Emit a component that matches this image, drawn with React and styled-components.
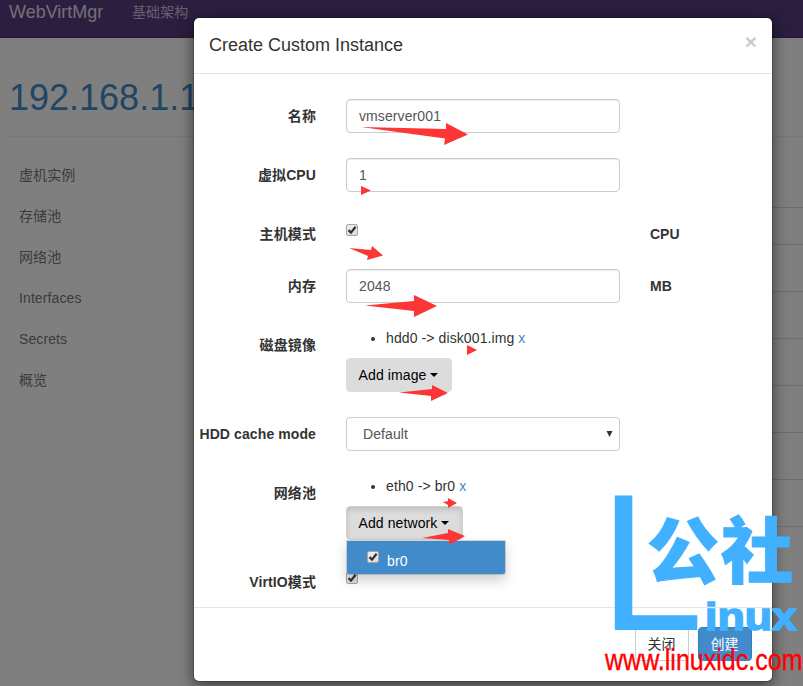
import React from "react";
import styled, { createGlobalStyle, css } from "styled-components";

const GlobalStyle = createGlobalStyle`
    * {
        box-sizing: border-box;
    }

    body {
        margin: 0;
        overflow: hidden;
        background: #fff;
        color: #333;
        font: 14px/20px "Liberation Sans", "Noto Sans CJK SC", sans-serif;
        letter-spacing: 0.1px;
    }
`

const Screen = styled.div`
    position: relative;
    width: 803px;
    height: 686px;
    overflow: hidden;
`

const Navbar = styled.nav`
    display: flex;
    height: 38px;
    padding-left: 9px;
    background: #563d7c;
    border-bottom: 1px solid #463265;
    color: #cdbfe3;
    line-height: 24px;

    .brand {
        width: 123px;
        color: #e4dfec;
        font-size: 18px;
        letter-spacing: 0;
    }
`

const Page = styled.main`
    padding: 35px 0 0 9px;

    h1 {
        margin: 0;
        height: 64px;
        border-bottom: 1px solid #eee;
        color: #428bca;
        font-size: 36px;
        font-weight: 400;
        line-height: 50px;
        letter-spacing: 0;
    }
`

const Columns = styled.div`
    display: flex;
    justify-content: space-between;
`

const SideNav = styled.ul`
    list-style: none;
    margin: 18px 0 0;
    padding: 0 0 0 10px;
    color: #777;

    li {
        height: 41px;
        line-height: 41px;
    }
`

const Table = styled.div`
    width: 200px;
    margin-top: 70px;
`

const TableRow = styled.div`
    height: ${props => props.$height}px;
    border-top: 1px solid #ddd;
`

const Backdrop = styled.div`
    position: absolute;
    inset: 0;
    background: rgba(0, 0, 0, 0.5);
`

const Modal = styled.section`
    position: absolute;
    top: 17px;
    left: 193px;
    width: 580px;
    height: 665px;
    background: #fff;
    background-clip: padding-box;
    border: 1px solid rgba(0, 0, 0, 0.2);
    border-radius: 6px;
    box-shadow: 0 5px 15px rgba(0, 0, 0, 0.5);
`

const ModalHeader = styled.header`
    display: flex;
    justify-content: space-between;
    height: 56px;
    padding: 14px 15px 0;
    border-bottom: 1px solid #e5e5e5;

    h4 {
        margin: 0;
        font-size: 18px;
        font-weight: 400;
        line-height: 26px;
        letter-spacing: 0;
    }

    .close {
        color: #ccc;
        font-size: 21px;
        font-weight: 700;
        line-height: 20px;
    }
`

const ModalBody = styled.div`
    height: 533px;
    padding-top: 25px;
`

const ModalFooter = styled.footer`
    display: flex;
    justify-content: flex-end;
    gap: 9px;
    padding: 19px 20px 0 0;
    border-top: 1px solid #e5e5e5;
`

const FormRow = styled.div`
    display: grid;
    grid-template-columns: 122px 274px 1fr;
    column-gap: 30px;
    height: ${props => props.$height}px;
`

const Label = styled.label`
    padding-top: 7px;
    font-weight: 700;
    text-align: right;
    white-space: nowrap;
`

const Unit = styled.span`
    padding-top: 7px;
    font-weight: 700;
    letter-spacing: 0;
`

const Control = styled.div`
    position: relative;
`

const field = css`
    display: block;
    width: 100%;
    height: 34px;
    background: #fff;
    border: 1px solid #ccc;
    border-radius: 4px;
    box-shadow: inset 0 1px 1px rgba(0, 0, 0, 0.075);
    color: #555;
    font: inherit;
    letter-spacing: inherit;
`

const Input = styled.input`
    ${field}
    padding: 6px 12px;
    outline: none;
`

const Select = styled.div`
    ${field}
    display: flex;
    justify-content: space-between;
    align-items: center;
    padding: 0 6px 0 16px;
    box-shadow: none;

    svg {
        fill: #333;
    }
`

const Box = styled.span`
    display: flex;
    width: 12px;
    height: 12px;
    margin-top: ${props => props.$top || 0}px;
    background: linear-gradient(#eee, #ddd);
    border: 1px solid #a6a6a6;
    border-radius: 2px;
`

const DeviceList = styled.ul`
    margin: 0;
    padding: 0 0 0 40px;
    height: 30px;

    a {
        color: #428bca;
    }
`

const Button = styled.button`
    display: inline-flex;
    align-items: center;
    justify-content: center;
    height: 34px;
    width: ${props => props.$width}px;
    padding: 0 1px 0 0;
    border: 1px solid #ccc;
    border-radius: 4px;
    background: #fff;
    color: #333;
    font: inherit;
    letter-spacing: inherit;
    white-space: nowrap;

    ${props => props.$kind === 'primary' && css`
        background: #428bca;
        border-color: #357ebd;
        color: #fff;
    `}

    ${props => props.$kind === 'toggle' && css`
        gap: 4px;
        background: #dcdcdc;
        border-color: #dcdcdc;
        color: #000;
    `}

    ${props => props.$open && css`
        border-color: #d0d0d0;
        box-shadow: inset 0 3px 5px rgba(0, 0, 0, 0.125);
    `}
`

const Caret = styled.i`
    border-top: 4px solid #000;
    border-left: 4px solid transparent;
    border-right: 4px solid transparent;
`

const Menu = styled.div`
    position: absolute;
    top: 64px;
    left: 0;
    z-index: 1;
    display: flex;
    gap: 8px;
    width: 160px;
    height: 35px;
    padding: 10px 0 0 20px;
    background: #428bca;
    background-clip: padding-box;
    border: 1px solid rgba(0, 0, 0, 0.15);
    border-radius: 0 0 3px 3px;
    box-shadow: 0 6px 12px rgba(0, 0, 0, 0.175);
    color: #fff;
`

const Overlay = styled.svg`
    position: absolute;
    inset: 0;
    z-index: 2;
    letter-spacing: 0;
    pointer-events: none;
`

const sections = ['虚机实例', '存储池', '网络池', 'Interfaces', 'Secrets', '概览']
const rowHeights = [37, 47, 47, 47, 47, 47, 47, 200]

const arrows = [
    '361,127 446,129 446,123 468,134.5 444,145 445,138.5',
    '361,186 371,190.5 361,195',
    '349,248 371,250 372,246 383,255.5 367,260 368,256',
    '365,305.5 414,301 414,295 437,306 414,317 414,311',
    '467,345 477,350 467,355',
    '399,392.5 432,389 432,385 448,393 431,401 431,396',
    '443,502 448,501 448,498 457,503 448,508 448,505',
    '422,538 448,533 448,529 465,536 449,545 449,540',
]

function Checkbox({ top }) {
    return (
        <Box $top={top}>
            <svg width="10" height="10" viewBox="0 0 10 10">
                <path d="M1.5 5.2 L4 7.6 L8.6 1.8" fill="none" stroke="#333" strokeWidth="2.3" />
            </svg>
        </Box>
    )
}

function Watermark() {
    return (
        <g fill="#41b1ff">
            <text transform="translate(599.6 630) scale(0.96 1)" fontSize="194.8">L</text>
            <g fontFamily="Noto Sans CJK SC" fontWeight="900" fontSize="72" stroke="#41b1ff" strokeWidth="1">
                <text x="647" y="577">公</text>
                <text x="721" y="577">社</text>
            </g>
            <text x="705" y="630" fontSize="39" fontWeight="700" stroke="#41b1ff" strokeWidth="1.6" textLength="92" lengthAdjust="spacingAndGlyphs">inux</text>
            <text x="605" y="670" fontSize="30" fill="#f00" stroke="#f00" strokeWidth="0.4" textLength="197.5" lengthAdjust="spacingAndGlyphs">www.linuxidc.com</text>
        </g>
    )
}

export default function App() {
    return (
        <Screen>
            <GlobalStyle />
            <Navbar>
                <span className="brand">WebVirtMgr</span>
                <span>基础架构</span>
            </Navbar>
            <Page>
                <h1>192.168.1.1</h1>
                <Columns>
                    <SideNav>
                        {sections.map(name => <li key={name}>{name}</li>)}
                    </SideNav>
                    <Table>
                        {rowHeights.map((height, i) => <TableRow key={i} $height={height} />)}
                    </Table>
                </Columns>
            </Page>
            <Backdrop />
            <Modal>
                <ModalHeader>
                    <h4>Create Custom Instance</h4>
                    <span className="close">×</span>
                </ModalHeader>
                <ModalBody>
                    <FormRow $height={59}>
                        <Label>名称</Label>
                        <Input defaultValue="vmserver001" />
                    </FormRow>
                    <FormRow $height={59}>
                        <Label>虚拟CPU</Label>
                        <Input defaultValue="1" />
                    </FormRow>
                    <FormRow $height={52}>
                        <Label>主机模式</Label>
                        <Checkbox top={7} />
                        <Unit>CPU</Unit>
                    </FormRow>
                    <FormRow $height={59}>
                        <Label>内存</Label>
                        <Input defaultValue="2048" />
                        <Unit>MB</Unit>
                    </FormRow>
                    <FormRow $height={89}>
                        <Label>磁盘镜像</Label>
                        <Control>
                            <DeviceList>
                                <li>{'hdd0 -> disk001.img '}<a>x</a></li>
                            </DeviceList>
                            <Button $kind="toggle" $width={106}>Add image <Caret /></Button>
                        </Control>
                    </FormRow>
                    <FormRow $height={59}>
                        <Label>HDD cache mode</Label>
                        <Select>
                            Default
                            <svg width="7" height="6"><path d="M0.5 0h6L3.5 6z" /></svg>
                        </Select>
                    </FormRow>
                    <FormRow $height={89}>
                        <Label>网络池</Label>
                        <Control>
                            <DeviceList>
                                <li>{'eth0 -> br0 '}<a>x</a></li>
                            </DeviceList>
                            <Button $kind="toggle" $width={117} $open>Add network <Caret /></Button>
                            <Menu>
                                <Checkbox />
                                <span>br0</span>
                            </Menu>
                        </Control>
                    </FormRow>
                    <FormRow $height={42}>
                        <Label>VirtIO模式</Label>
                        <Checkbox top={7} />
                    </FormRow>
                </ModalBody>
                <ModalFooter>
                    <Button $width={54}>关闭</Button>
                    <Button $width={54} $kind="primary">创建</Button>
                </ModalFooter>
            </Modal>
            <Overlay width="803" height="686">
                {arrows.map(points => <polygon key={points} points={points} fill="#fc3535" />)}
                <Watermark />
            </Overlay>
        </Screen>
    )
}
